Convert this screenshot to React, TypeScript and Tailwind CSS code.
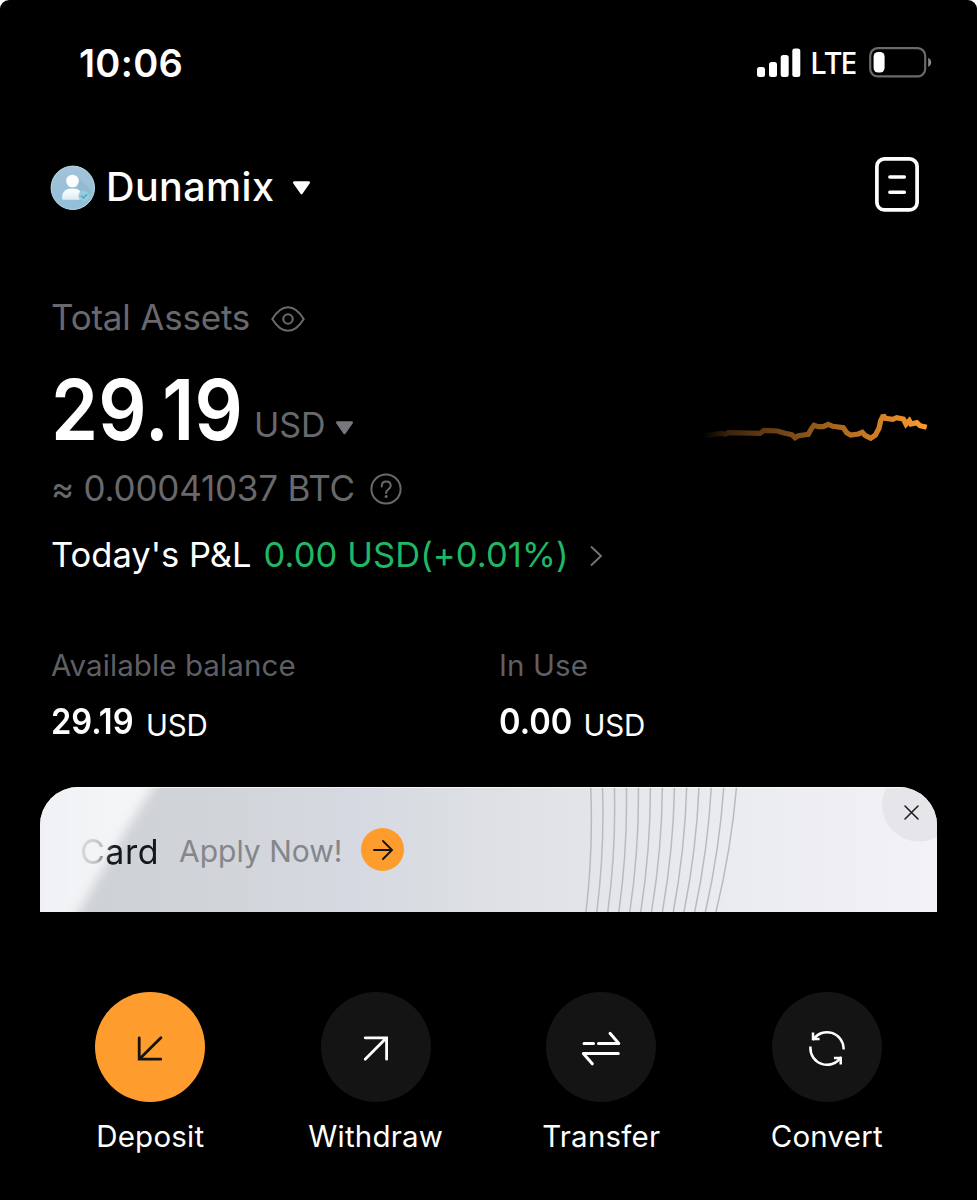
import React from "react";

type Action = {
  label: string;
  icon: React.ReactNode;
  primary?: boolean;
};

const SignalIcon = () => (
  <svg width="44" height="30" viewBox="0 0 44 30" fill="#fff">
    <rect x="0" y="19" width="8" height="10" rx="2.5" />
    <rect x="12" y="14" width="8" height="15" rx="2.5" />
    <rect x="23.7" y="7" width="8" height="22" rx="2.5" />
    <rect x="35.3" y="0.5" width="8" height="28.5" rx="2.5" />
  </svg>
);

const BatteryIcon = () => (
  <svg width="63" height="31" viewBox="0 0 63 31">
    <rect x="1.2" y="1.2" width="55" height="28.2" rx="7.5" fill="none" stroke="#6a6a6a" strokeWidth="2.2" />
    <rect x="4.6" y="5" width="11" height="20.5" rx="4.5" fill="#fff" />
    <path d="M59.2 10.8c4 2.4 4 6.8 0 9.2z" fill="#8a8a8a" />
  </svg>
);

const AvatarIcon = () => (
  <svg width="45" height="46" viewBox="0 0 45 46">
    <defs>
      <linearGradient id="avatar" x1="0" y1="0" x2="0" y2="1">
        <stop offset="0" stopColor="#a3c3d8" />
        <stop offset="1" stopColor="#92bfd9" />
      </linearGradient>
      <linearGradient id="person" x1="0" y1="0" x2="0" y2="1">
        <stop offset="0" stopColor="#fff" />
        <stop offset="1" stopColor="#dcebf5" />
      </linearGradient>
    </defs>
    <circle cx="22.8" cy="22.8" r="21.7" fill="url(#avatar)" stroke="#b9dcec" strokeWidth="1" />
    <path d="M28 12l14 14-6 11-8-1z" fill="#86aec8" opacity=".35" />
    <circle cx="22.5" cy="16" r="6.3" fill="#fbfdff" />
    <path d="M12 33c0-6.5 4-9.5 10.5-9.5S32 26.5 32 33c0 1.2-.6 1.8-1.5 1.8h-17C12.6 34.8 12 34.2 12 33z" fill="url(#person)" />
    <circle cx="33.8" cy="31" r="5.4" fill="#9cc9dc" />
    <path d="M31 30.5l2.6 2.4 3.4-3.6" fill="none" stroke="#35b5c4" strokeWidth="1.4" />
  </svg>
);

const Caret = ({ color }: { color: string }) => (
  <svg width="19" height="14" viewBox="0 0 19 14">
    <path d="M2.2 1.5h14.6L9.5 12z" fill={color} stroke={color} strokeWidth="2.4" strokeLinejoin="round" />
  </svg>
);

const OrdersIcon = () => (
  <svg width="44" height="55" viewBox="0 0 44 55" fill="none" stroke="#fff" strokeLinecap="round">
    <rect x="1.9" y="1.9" width="40.2" height="51" rx="7.5" strokeWidth="3.7" />
    <path d="M14.8 20h14.6M14.8 35.2h14.6" strokeWidth="3.4" />
  </svg>
);

const EyeIcon = () => (
  <svg width="34" height="26" viewBox="0 0 34 26" fill="none" stroke="#68686d" strokeWidth="2.1">
    <path d="M1.3 13C5.5 6 10 1.2 17 1.2S28.5 6 32.7 13C28.5 20 24 24.8 17 24.8S5.5 20 1.3 13z" strokeLinejoin="round" />
    <circle cx="17" cy="13" r="4.7" />
  </svg>
);

const HelpIcon = () => (
  <svg width="32" height="32" viewBox="0 0 32 32" fill="none" stroke="#68686d" strokeWidth="2">
    <circle cx="16" cy="16" r="14.6" />
    <path d="M11.7 13.4c0-3 1.8-4.8 4.5-4.8s4.5 1.7 4.5 4.2c0 3.3-4.6 3.6-4.6 7.200" strokeLinecap="round" />
    <circle cx="16.1" cy="23.6" r="1.5" fill="#68686d" stroke="none" />
  </svg>
);

const history =
  "10,28.5 17,28 28.7,26.3 32,27.3 35.3,25.7 67,26.3 71,23.3 84.3,24 92,26.3 98.7,27.7 102,30.7 105.3,28.7 115.3,27.3 118,22.3 121,18.3 125.3,19.7 130.3,19.7 135.3,17.3 139.7,19.3 150.3,20.7 153.7,25.7 157.7,28 165.3,27 169.3,25.3 172,28.3 177.7,31.3 182.3,28.3 186,21.3 187.7,13.7 190.3,8.3 192.3,11.3 199.7,12.3 203.7,10.7 210.3,12 213,17.3 216.3,13.7 218,17 223.7,15.7 227,18.7 233.7,20.3";

const Sparkline = () => (
  <svg width="240" height="40" viewBox="0 0 240 40" fill="none">
    <defs>
      <linearGradient id="spark" gradientUnits="userSpaceOnUse" x1="10" y1="0" x2="234" y2="0">
        <stop offset="0" stopColor="#f7962d" stopOpacity="0" />
        <stop offset=".12" stopColor="#f7962d" stopOpacity=".25" />
        <stop offset=".45" stopColor="#f7962d" stopOpacity=".55" />
        <stop offset=".75" stopColor="#f7962d" stopOpacity=".82" />
        <stop offset="1" stopColor="#ff9b2e" />
      </linearGradient>
    </defs>
    <polyline points={history} stroke="url(#spark)" strokeWidth="5.2" strokeLinejoin="miter" strokeMiterlimit="2" />
  </svg>
);

// x of every arc on the banner, at its top and at its bottom edge
const arcs = [
  [550.7, 546],
  [562.5, 556.8],
  [574.4, 567.8],
  [586.4, 578.8],
  [598.4, 589.8],
  [610.4, 600.7],
  [622.4, 611.5],
  [634.5, 622.4],
  [646.7, 633.3],
  [659, 644],
  [671.3, 654.7],
  [683.8, 665.4],
  [696.5, 676],
];

const BannerArt = () => (
  <svg className="absolute inset-0" width="897" height="125" viewBox="0 0 897 125">
    <defs>
      <linearGradient id="sheet">
        <stop offset="0" stopColor="#cdd0d4" />
        <stop offset=".2" stopColor="#d1d4d8" />
        <stop offset=".35" stopColor="#d6d9e1" />
        <stop offset=".46" stopColor="#dbdee2" />
        <stop offset=".6" stopColor="#e3e4e8" />
        <stop offset=".8" stopColor="#ecedf1" />
        <stop offset="1" stopColor="#f3f2f6" />
      </linearGradient>
      <linearGradient id="shine">
        <stop offset="0" stopColor="#eff0f3" />
        <stop offset="1" stopColor="#f6f7f9" />
      </linearGradient>
      <filter id="soft" x="-20%" y="-20%" width="140%" height="140%">
        <feGaussianBlur stdDeviation="5.5" />
      </filter>
    </defs>
    <rect width="897" height="125" fill="url(#sheet)" />
    <path d="M-40-30H133Q82 45 25 150H-40z" fill="url(#shine)" filter="url(#soft)" />
    {arcs.map(([top, bottom]) => (
      <path
        key={top}
        d={`M${top} 0Q${(top + bottom) / 2 + 5} 62 ${bottom} 125`}
        fill="none"
        stroke="#b9babf"
        strokeWidth="1.5"
      />
    ))}
    <circle cx="879" cy="17.5" r="37" fill="#e6e6ea" />
    <path d="M0 .5H897" stroke="#fff" strokeOpacity=".7" />
  </svg>
);

const actions: Action[] = [
  {
    label: "Deposit",
    primary: true,
    icon: (
      <svg width="44" height="44" viewBox="0 0 44 44" fill="none" stroke="#15120e" strokeWidth="2.8" strokeLinecap="round">
        <path d="M32.9 12.8L11.5 34M11.2 12.8v21.4h21.6" />
      </svg>
    ),
  },
  {
    label: "Withdraw",
    icon: (
      <svg width="44" height="44" viewBox="0 0 44 44" fill="none" stroke="#fff" strokeWidth="2.8" strokeLinecap="round">
        <path d="M11.2 34.2L32.3 13M11.2 12.8h21.4v21.4" />
      </svg>
    ),
  },
  {
    label: "Transfer",
    icon: (
      <svg width="44" height="44" viewBox="0 0 44 44" fill="none" stroke="#fff" strokeWidth="3" strokeLinecap="round" strokeLinejoin="round">
        <path d="M5 18.5h9.5M19.5 18.5h20.3L31 8.3M39.3 28.5H4.3L13.3 38.8" />
      </svg>
    ),
  },
  {
    label: "Convert",
    icon: (
      <svg width="44" height="44" viewBox="0 0 44 44" fill="none" stroke="#fff" strokeWidth="2.5" strokeLinecap="square">
        <path d="M8.6 14A16.6 16.6 0 0 1 38.6 23.200M5.4 22.8A16.6 16.6 0 0 0 35.4 33" />
        <path d="M8 8.8v5.2h5.300M30.2 33h5.500v5.200" />
      </svg>
    ),
  },
];

const Balance = ({ title, value, valueClass }: { title: string; value: string; valueClass: string }) => (
  <div className="w-[448px]">
    <div className="flex items-center h-[49px] text-[29.5px] text-[#5f5f64] tracking-[0.1px]">{title}</div>
    <div className="flex items-center h-[63px]">
      <span className={`text-[35.5px] font-semibold origin-left scale-x-92 ${valueClass}`}>{value}</span>
      <span className="pt-[9px] text-[29.5px] tracking-[-0.2px]">USD</span>
    </div>
  </div>
);

const App: React.FC = () => {
  return (
    <div className="bg-white w-[977px]">
      <main className="flex flex-col w-[977px] h-[1200px] overflow-hidden bg-black rounded-t-[9px] font-['Inter',sans-serif] text-white leading-none whitespace-nowrap">
        <div className="flex items-center justify-between h-[125px] pl-[79px] pr-[45px]">
          <span className="text-[38px] font-semibold tracking-[0.3px]">10:06</span>
          <div className="flex items-center">
            <SignalIcon />
            <span className="w-[59px] ml-[9px] text-[30.5px] font-medium font-['Noto_Sans',sans-serif] tracking-[-1.3px]">LTE</span>
            <BatteryIcon />
          </div>
        </div>

        <header className="flex items-center justify-between h-[126px] pl-[50px] pr-[58px]">
          <div className="flex items-center">
            <AvatarIcon />
            <span className="ml-[11px] mr-[18px] text-[39.5px] font-medium tracking-[0.4px]">Dunamix</span>
            <Caret color="#fff" />
          </div>
          <div className="pb-[7px]">
            <OrdersIcon />
          </div>
        </header>

        <section className="pt-[47px] pl-[51px]">
          <div className="flex items-center h-[39px] text-[#68686d]">
            <span className="text-[35px] mr-[21px] tracking-[-0.2px]">Total Assets</span>
            <span className="pt-[3px]">
              <EyeIcon />
            </span>
          </div>

          <div className="flex items-center justify-between h-[95px] mt-[25px] pr-[44px]">
            <div className="flex items-center">
              <span className="w-[203px] text-[84px] font-semibold">
                <span className="inline-block origin-left scale-x-90 tracking-[0.2px]">29.19</span>
              </span>
              <span className="pt-[30px] mr-[9px] text-[34px] text-[#68686d]">USD</span>
              <span className="pt-[37px]">
                <Caret color="#77777d" />
              </span>
            </div>
            <div className="pt-[35px]">
              <Sparkline />
            </div>
          </div>

          <div className="flex items-center h-[63px] text-[35px] text-[#68686d] tracking-[-0.2px]">
            <span className="mr-[15px]">≈ 0.00041037 BTC</span>
            <HelpIcon />
          </div>

          <div className="flex items-center h-[71px] text-[34.5px]">
            <span>Today's P&amp;L</span>
            <span className="ml-[12px] mr-[21px] text-[#1fb866] tracking-[0.1px]">0.00 USD(+0.01%)</span>
            <svg width="14" height="22" viewBox="0 0 14 22" fill="none" stroke="#77777a" strokeWidth="1.8">
              <path d="M1 1.5L11 11L1 20.5" />
            </svg>
          </div>

          <div className="flex pt-[50px]">
            <Balance title="Available balance" value="29.19" valueClass="w-[95px]" />
            <Balance title="In Use" value="0.00" valueClass="w-[84.5px]" />
          </div>
        </section>

        <section className="relative flex items-center h-[125px] mt-[34px] mx-[40px] overflow-hidden rounded-t-[38px]">
          <BannerArt />
          <div className="relative flex items-center pt-[3px] pl-[40px]">
            <span className="pt-[2px] text-[34px] tracking-[0.5px] text-transparent bg-clip-text bg-[linear-gradient(105deg,#d6d7d9_10%,#bfc1c4_28%,#14181c_42%)]">
              Card
            </span>
            <span className="ml-[20px] mr-[19px] text-[30px] text-[#84868b]">Apply Now!</span>
            <span className="flex items-center justify-center w-[43px] h-[43px] -mt-[4px] rounded-full bg-[#ff9c2e]">
              <svg width="22" height="22" viewBox="0 0 22 22" fill="none" stroke="#15120e" strokeWidth="1.9" strokeLinecap="round">
                <path d="M2 12h18M11 3L20 12L11 21" />
              </svg>
            </span>
          </div>
          <svg className="absolute top-[18px] right-[18px]" width="15" height="15" viewBox="0 0 15 15" stroke="#1b1b1d" strokeWidth="1.5" strokeLinecap="round">
            <path d="M1 1l13 13M14 1L1 14" />
          </svg>
        </section>

        <nav className="grid grid-cols-4 mt-[80px] mx-[37.5px]">
          {actions.map(({ label, icon, primary }) => (
            <div key={label} className="flex flex-col items-center">
              <span
                className={`flex items-center justify-center w-[110px] h-[110px] rounded-full ${
                  primary ? "bg-[#ff9c2e]" : "bg-[#141414]"
                }`}
              >
                {icon}
              </span>
              <span className="flex items-center h-[70px] text-[29.5px] tracking-[0.2px]">{label}</span>
            </div>
          ))}
        </nav>
      </main>
    </div>
  );
};

export default App;
